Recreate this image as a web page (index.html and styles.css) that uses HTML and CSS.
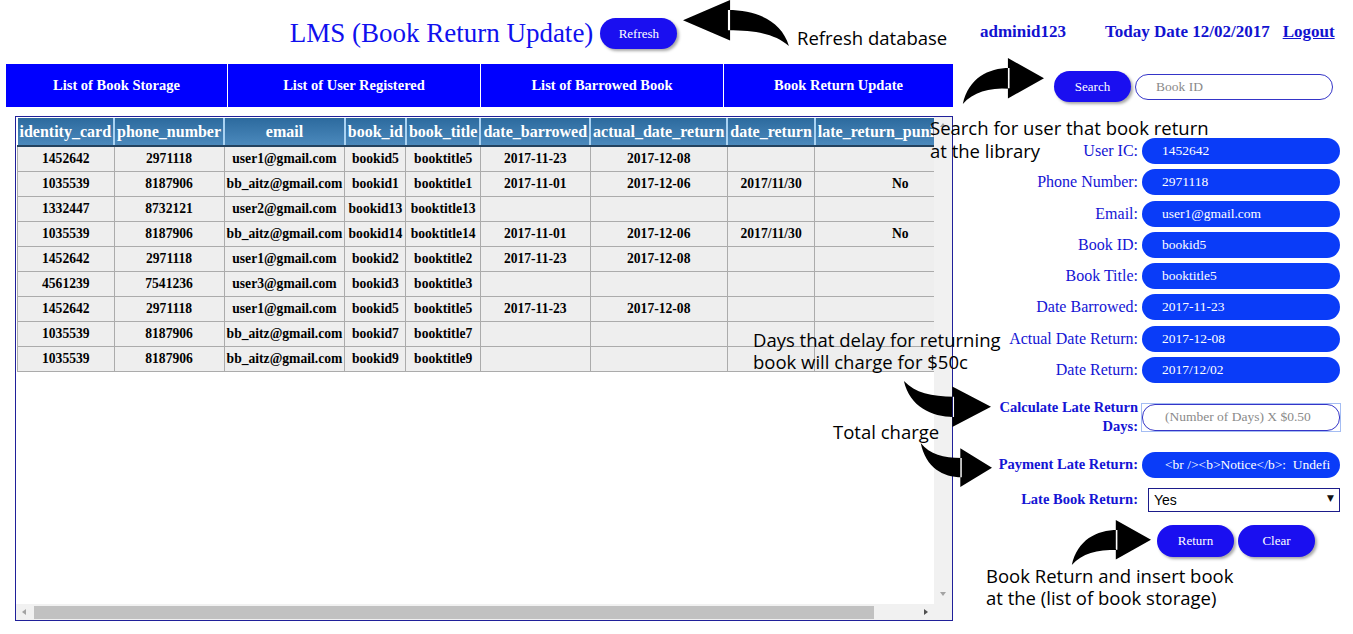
FILE: index.html
```html
<!DOCTYPE html>
<html>
<head>
<meta charset="utf-8">
<title>LMS (Book Return Update)</title>
<link rel="stylesheet" href="styles.css">
</head>
<body>
<div class="page">
  <div class="left">
    <header class="top">
      <h1 class="title">LMS (Book Return Update)</h1>
      <button class="btn">Refresh</button>
    </header>
    <nav class="tabs">
      <a class="tab">List of Book Storage</a>
      <a class="tab">List of User Registered</a>
      <a class="tab">List of Barrowed Book</a>
      <a class="tab">Book Return Update</a>
    </nav>
    <div class="tablebox">
      <div class="viewport">
        <table class="grid">
          <thead>
            <tr><th>identity_card</th><th>phone_number</th><th>email</th><th>book_id</th><th>book_title</th><th>date_barrowed</th><th>actual_date_return</th><th>date_return</th><th>late_return_punishment</th></tr>
          </thead>
          <tbody>
            <tr><td>1452642</td><td>2971118</td><td>user1@gmail.com</td><td>bookid5</td><td>booktitle5</td><td>2017-11-23</td><td>2017-12-08</td><td></td><td></td></tr>
            <tr><td>1035539</td><td>8187906</td><td>bb_aitz@gmail.com</td><td>bookid1</td><td>booktitle1</td><td>2017-11-01</td><td>2017-12-06</td><td>2017/11/30</td><td>No</td></tr>
            <tr><td>1332447</td><td>8732121</td><td>user2@gmail.com</td><td>bookid13</td><td>booktitle13</td><td></td><td></td><td></td><td></td></tr>
            <tr><td>1035539</td><td>8187906</td><td>bb_aitz@gmail.com</td><td>bookid14</td><td>booktitle14</td><td>2017-11-01</td><td>2017-12-06</td><td>2017/11/30</td><td>No</td></tr>
            <tr><td>1452642</td><td>2971118</td><td>user1@gmail.com</td><td>bookid2</td><td>booktitle2</td><td>2017-11-23</td><td>2017-12-08</td><td></td><td></td></tr>
            <tr><td>4561239</td><td>7541236</td><td>user3@gmail.com</td><td>bookid3</td><td>booktitle3</td><td></td><td></td><td></td><td></td></tr>
            <tr><td>1452642</td><td>2971118</td><td>user1@gmail.com</td><td>bookid5</td><td>booktitle5</td><td>2017-11-23</td><td>2017-12-08</td><td></td><td></td></tr>
            <tr><td>1035539</td><td>8187906</td><td>bb_aitz@gmail.com</td><td>bookid7</td><td>booktitle7</td><td></td><td></td><td></td><td></td></tr>
            <tr><td>1035539</td><td>8187906</td><td>bb_aitz@gmail.com</td><td>bookid9</td><td>booktitle9</td><td></td><td></td><td></td><td></td></tr>
          </tbody>
        </table>
      </div>
      <div class="vbar">
        <svg class="sarrow" viewBox="0 0 8 8"><polygon points="1,6 7,6 4,2"/></svg>
        <svg class="sarrow" viewBox="0 0 8 8"><polygon points="1,2 7,2 4,6"/></svg>
      </div>
      <div class="hbar">
        <svg class="sarrow" viewBox="0 0 8 8"><polygon points="6,1 6,7 2,4"/></svg>
        <div class="htrack"><div class="hthumb"></div></div>
        <svg class="sarrow dark" viewBox="0 0 8 8"><polygon points="2,1 2,7 6,4"/></svg>
      </div>
      <div class="corner"></div>
    </div>
  </div>

  <div class="right">
    <div class="userbar">
      <span class="user">adminid123</span>
      <span class="date">Today Date 12/02/2017</span>
      <a class="logout">Logout</a>
    </div>
    <div class="search">
      <button class="btn">Search</button>
      <input class="blank" type="text" placeholder="Book ID">
    </div>
    <div class="form">
      <div class="row"><label class="lbl">User IC:</label><input class="fill" type="text" value="1452642"></div>
      <div class="row"><label class="lbl">Phone Number:</label><input class="fill" type="text" value="2971118"></div>
      <div class="row"><label class="lbl">Email:</label><input class="fill" type="text" value="user1@gmail.com"></div>
      <div class="row"><label class="lbl">Book ID:</label><input class="fill" type="text" value="bookid5"></div>
      <div class="row"><label class="lbl">Book Title:</label><input class="fill" type="text" value="booktitle5"></div>
      <div class="row"><label class="lbl">Date Barrowed:</label><input class="fill" type="text" value="2017-11-23"></div>
      <div class="row"><label class="lbl">Actual Date Return:</label><input class="fill" type="text" value="2017-12-08"></div>
      <div class="row"><label class="lbl">Date Return:</label><input class="fill" type="text" value="2017/12/02"></div>
      <div class="row calc"><label class="lbl strong">Calculate Late Return<br>Days:</label><span class="ring"><input class="blank wide" type="text" placeholder="(Number of Days) X $0.50"></span></div>
      <div class="row pay"><label class="lbl strong">Payment Late Return:</label><input class="fill pad" type="text" value="&lt;br /&gt;&lt;b&gt;Notice&lt;/b&gt;:  Undefined index: total"></div>
      <div class="row late"><label class="lbl strong">Late Book Return:</label><span class="pickwrap"><select class="pick"><option>Yes</option><option>No</option></select><span class="caret">&#9660;</span></span></div>
      <div class="actions"><button class="btn">Return</button><button class="btn">Clear</button></div>
    </div>
  </div>
</div>

<div class="notes">
  <svg class="arrow a-refresh" viewBox="0 0 100 50" preserveAspectRatio="none"><path d="M56,0 L100,22 L56,44 Z M58,11 C32,11 8,22 1,50 C14,37 32,33 58,33 Z"/></svg>
  <svg class="arrow a-search" viewBox="0 0 100 50" preserveAspectRatio="none"><path d="M56,0 L100,22 L56,44 Z M58,11 C32,11 8,22 1,50 C14,37 32,33 58,33 Z"/></svg>
  <svg class="arrow a-days" viewBox="0 0 100 50" preserveAspectRatio="none"><path d="M56,0 L100,22 L56,44 Z M58,11 C32,11 8,22 1,50 C14,37 32,33 58,33 Z"/></svg>
  <svg class="arrow a-total" viewBox="0 0 100 50" preserveAspectRatio="none"><path d="M56,0 L100,22 L56,44 Z M58,11 C32,11 8,22 1,50 C14,37 32,33 58,33 Z"/></svg>
  <svg class="arrow a-return" viewBox="0 0 100 50" preserveAspectRatio="none"><path d="M56,0 L100,22 L56,44 Z M58,11 C32,11 8,22 1,50 C14,37 32,33 58,33 Z"/></svg>
  <div class="note n-refresh">Refresh database</div>
  <div class="note n-search">Search for user that book return<br>at the library</div>
  <div class="note n-days">Days that delay for returning<br>book will charge for $50c</div>
  <div class="note n-total">Total charge</div>
  <div class="note n-return">Book Return and insert book<br>at the (list of book storage)</div>
</div>
</body>
</html>
```

FILE: styles.css
```css
* { box-sizing: border-box; }
html, body { margin: 0; padding: 0; }
body {
  font-family: "Liberation Serif", "Times New Roman", serif;
  background: #fff;
  width: 1353px;
  height: 634px;
  overflow: hidden;
  position: relative;
}
.page { display: flex; }

/* left column */
.left { width: 953px; padding-left: 6px; }
.top {
  height: 64px;
  display: flex;
  align-items: center;
  justify-content: center;
  gap: 7px;
  padding-top: 3px;
  padding-left: 8px;
}
.title {
  margin: 0;
  font-size: 27px;
  font-weight: normal;
  color: #1010ee;
}
.btn {
  width: 77px;
  height: 31px;
  border: none;
  border-radius: 16px;
  background: #1a0ff0;
  color: #fff;
  font-family: "Liberation Serif", serif;
  font-size: 13px;
  box-shadow: 2px 2px 3px rgba(0, 0, 0, 0.35);
  padding: 0;
}
.tabs {
  display: grid;
  grid-template-columns: 221px 252px 242px 229px;
  column-gap: 1px;
  height: 43px;
}
.tab {
  background: #0000ff;
  color: #fff;
  font-weight: bold;
  font-size: 14.5px;
  display: flex;
  align-items: center;
  justify-content: center;
}

/* table box with its scrollbars */
.tablebox {
  margin: 9px 0 0 9px;
  width: 938px;
  height: 505px;
  border: 1px solid #20209a;
  display: grid;
  grid-template-columns: 1fr 18px;
  grid-template-rows: 1fr 16px;
}
.viewport { overflow: hidden; padding: 1px 0 0 1px; }
.vbar {
  background: #f1f1f1;
  display: flex;
  flex-direction: column;
  justify-content: space-between;
  align-items: center;
  padding: 4px 0 6px;
}
.hbar {
  background: #f1f1f1;
  display: flex;
  align-items: center;
}
.htrack { flex: 1; height: 16px; display: flex; align-items: center; }
.hthumb { width: 840px; height: 13px; margin-left: 2px; background: #c1c1c1; }
.corner { background: #f1f1f1; }
.sarrow { width: 8px; height: 8px; fill: #a3a3a3; flex: none; margin: 0 4px; }
.sarrow.dark { fill: #505050; }

.grid {
  border-collapse: collapse;
  white-space: nowrap;
}
.grid th {
  height: 28px;
  padding: 0 2px;
  color: #fff;
  font-size: 16px;
  font-weight: bold;
  background: linear-gradient(#2c6a9e, #4b89bc);
  border-left: 2px solid #a9d2f2;
  border-bottom: 2px solid #23425f;
}
.grid th:first-child { border-left: none; }
.grid td {
  height: 25px;
  padding: 0 2px;
  background: #eeeeee;
  border: 1px solid #ababab;
  font-size: 13.6px;
  font-weight: bold;
  text-align: center;
}

/* right column */
.right { flex: 1; }
.userbar {
  height: 64px;
  display: flex;
  align-items: center;
  padding-left: 27px;
  color: #1212d0;
  font-weight: bold;
  font-size: 17px;
}
.user { margin-right: 39px; }
.date { margin-right: 13px; }
.logout { color: #1212d0; text-decoration: underline; }

.search {
  margin-top: 7px;
  padding-left: 101px;
  display: flex;
  align-items: center;
  gap: 4px;
  height: 31px;
}
.blank {
  width: 198px;
  height: 26px;
  border: 1px solid #3535c8;
  border-radius: 13px;
  background: #fff;
  padding: 0 0 0 20px;
  font-family: "Liberation Serif", serif;
  font-size: 13.5px;
  color: #333;
  outline: none;
}
.blank::placeholder { color: #8a8a8a; }

.form {
  margin-top: 36px;
  display: flex;
  flex-direction: column;
  gap: 5.3px;
}
.row {
  display: flex;
  align-items: center;
  gap: 4px;
  padding-left: 5px;
}
.lbl {
  width: 180px;
  text-align: right;
  color: #1414d4;
  font-size: 16px;
  white-space: nowrap;
}
.lbl.strong { font-size: 14.5px; font-weight: bold; line-height: 19px; }
.fill {
  width: 198px;
  height: 26px;
  border: none;
  border-radius: 13px;
  background: #0a3cf8;
  color: #fff;
  padding: 0 10px 0 20px;
  font-family: "Liberation Serif", serif;
  font-size: 13.5px;
  outline: none;
}
.fill.pad { padding-left: 23px; }
.row.calc { margin-top: 10px; }
.row.pay { margin-top: 10px; }
.row.late { margin-top: 5px; }
.ring {
  display: inline-flex;
  border: 1px solid #a4bdf3;
  margin-left: -1px;
}
.blank.wide { width: 198px; height: 27px; padding-left: 22px; }
.pickwrap { position: relative; margin-left: 6px; display: inline-block; }
.pick {
  width: 192px;
  height: 24px;
  border: 1px solid #1b1b8a;
  border-radius: 0;
  background: #fff;
  padding: 0 0 0 5px;
  font-family: "Liberation Sans", Arial, sans-serif;
  font-size: 14px;
  color: #000;
  appearance: none;
  -webkit-appearance: none;
  display: block;
}
.caret {
  position: absolute;
  right: 6px;
  top: 5px;
  font-family: "DejaVu Sans", sans-serif;
  font-size: 9px;
  color: #111;
}
.actions {
  margin-top: 8px;
  padding-left: 204px;
  display: flex;
  gap: 4px;
}
.actions .btn { height: 32px; }

/* annotation overlay */
.notes { position: absolute; left: 0; top: 0; width: 0; height: 0; pointer-events: none; }
.note {
  position: absolute;
  font-family: "Open Sans", "DejaVu Sans", sans-serif;
  font-size: 18.5px;
  line-height: 22px;
  color: #000;
  white-space: nowrap;
}
.n-refresh { left: 797px; top: 27px; }
.n-search { left: 930px; top: 116px; line-height: 23px; }
.n-days { left: 753px; top: 329px; }
.n-total { left: 833px; top: 421px; }
.n-return { left: 986px; top: 565px; }
.arrow { position: absolute; fill: #000; }
.a-refresh { left: 683px; top: 0; width: 107px; height: 46px; transform: scaleX(-1); }
.a-search { left: 962px; top: 58px; width: 82px; height: 46px; }
.a-days { left: 903px; top: 381px; width: 88px; height: 46px; transform: scaleY(-1); }
.a-total { left: 920px; top: 443px; width: 72px; height: 44px; transform: scaleY(-1); }
.a-return { left: 1071px; top: 520px; width: 80px; height: 45px; }
```
